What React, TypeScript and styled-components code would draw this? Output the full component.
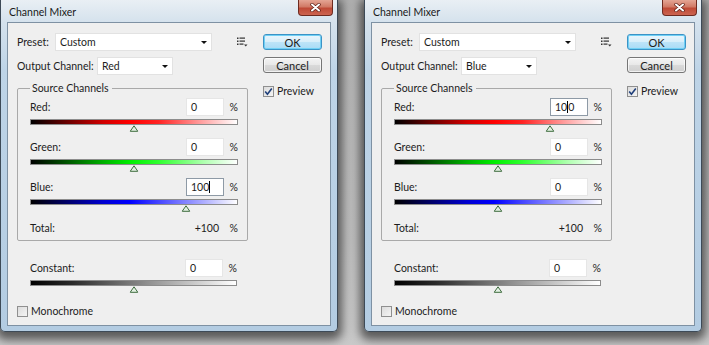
import React from 'react'
import styled, { createGlobalStyle } from 'styled-components'

const GlobalStyle = createGlobalStyle`
  html, body {
    margin: 0;
    padding: 0;
  }
  body {
    width: 709px;
    height: 345px;
    overflow: hidden;
    background: #c3c3c3;
    font-family: Lato, "Noto Sans", sans-serif;
    color: #1c1c1c;
  }
`

const RED =
  'linear-gradient(to right, #000 0%, #5a0000 15%, #d00000 35%, #ff0000 48%, #ff2424 62%, #ff9c9c 82%, #fff 100%)'
const GREEN =
  'linear-gradient(to right, #000 0%, #004800 15%, #00b000 35%, #00ee00 48%, #30ff30 62%, #b0ffb0 84%, #fff 100%)'
const BLUE =
  'linear-gradient(to right, #000 0%, #00005a 15%, #0000d0 35%, #0000ff 48%, #3c3cff 60%, #aeaeff 84%, #fff 100%)'
const GRAY = 'linear-gradient(to right, #000 0%, #2a2a2a 20%, #8a8a8a 55%, #fff 100%)'

type Channel = {
  name: string
  value: string
  caret?: number
  gradient: string
  amount: number
}

type DialogProps = {
  output: string
  channels: Channel[]
}

const MenuIcon = () => (
  <svg width="11" height="10" viewBox="0 0 11 10">
    <g fill="#333">
      <rect x="0" y="0.5" width="1.5" height="1.5" />
      <rect x="0" y="3.5" width="1.5" height="1.5" />
      <rect x="0" y="6.5" width="1.5" height="1.5" />
      <rect x="2.5" y="0.5" width="5.5" height="1.2" />
      <rect x="2.5" y="3.5" width="5.5" height="1.2" />
      <rect x="2.5" y="6.5" width="4" height="1.2" />
      <path d="M7 7.5 L10.5 7.5 L8.75 9.5 Z" />
    </g>
  </svg>
)

const CloseIcon = () => (
  <svg width="11" height="9" viewBox="0 0 11 9">
    <path d="M2 1.5 L9 7.5 M9 1.5 L2 7.5" stroke="#5c1d14" strokeWidth="3.4" strokeLinecap="round" />
    <path d="M2 1.5 L9 7.5 M9 1.5 L2 7.5" stroke="#fff" strokeWidth="2" strokeLinecap="round" />
  </svg>
)

const Thumb = () => (
  <svg width="9" height="7" viewBox="0 0 9 7">
    <path d="M4.5 0.8 L8.3 6.3 L0.7 6.3 Z" fill="#e4f1e4" stroke="#3f6d3f" strokeWidth="1" />
  </svg>
)

const Check = () => (
  <svg width="9" height="9" viewBox="0 0 9 9">
    <path d="M1.2 4.6 L3.4 7.2 L7.8 1.4" fill="none" stroke="#1f3f7a" strokeWidth="1.6" />
  </svg>
)

const Slider = ({ gradient, amount }: { gradient: string; amount: number }) => (
  <SliderTrack>
    <Bar $gradient={gradient} />
    <ThumbSpot style={{ left: `${((amount + 200) / 400) * 100}%` }}>
      <Thumb />
    </ThumbSpot>
  </SliderTrack>
)

const ValueBox = ({ value, caret }: { value: string; caret?: number }) => {
  const focused = caret !== undefined
  return (
    <Input $focused={focused}>
      {focused ? value.slice(0, caret) : value}
      {focused && <Caret />}
      {focused && value.slice(caret)}
    </Input>
  )
}

const Dialog = ({ output, channels }: DialogProps) => (
  <Window>
    <TitleBar>
      <Title>Channel Mixer</Title>
      <CloseButton>
        <CloseIcon />
      </CloseButton>
    </TitleBar>
    <Client>
      <Main>
        <FieldRow>
          <Label $width={38}>Preset:</Label>
          <Select $width={157}>
            Custom
            <Arrow />
          </Select>
          <MenuSpot>
            <MenuIcon />
          </MenuSpot>
        </FieldRow>
        <FieldRow $gap={6}>
          <Label $width={80}>Output Channel:</Label>
          <Select $width={76}>
            {output}
            <Arrow />
          </Select>
        </FieldRow>
        <Group>
          <Legend>Source Channels</Legend>
          {channels.map((c, i) => (
            <ChannelBlock key={c.name} $first={i === 0}>
              <ValueRow>
                <span>{c.name}:</span>
                <ValueBox value={c.value} caret={c.caret} />
                <Percent>%</Percent>
              </ValueRow>
              <Slider gradient={c.gradient} amount={c.amount} />
            </ChannelBlock>
          ))}
          <TotalRow>
            <span>Total:</span>
            <TotalValue>+100</TotalValue>
            <Percent>%</Percent>
          </TotalRow>
        </Group>
        <ConstantBlock>
          <ValueRow>
            <span>Constant:</span>
            <ValueBox value="0" />
            <Percent>%</Percent>
          </ValueRow>
          <Slider gradient={GRAY} amount={0} />
        </ConstantBlock>
        <CheckRow $top={12}>
          <Box />
          Monochrome
        </CheckRow>
      </Main>
      <Side>
        <Button $primary>OK</Button>
        <Button>Cancel</Button>
        <CheckRow $top={4}>
          <Box>
            <Check />
          </Box>
          Preview
        </CheckRow>
      </Side>
    </Client>
  </Window>
)

const App = () => (
  <>
    <GlobalStyle />
    <Page>
      <Dialog
        output="Red"
        channels={[
          { name: 'Red', value: '0', gradient: RED, amount: 0 },
          { name: 'Green', value: '0', gradient: GREEN, amount: 0 },
          { name: 'Blue', value: '100', caret: 3, gradient: BLUE, amount: 100 },
        ]}
      />
      <Dialog
        output="Blue"
        channels={[
          { name: 'Red', value: '100', caret: 2, gradient: RED, amount: 100 },
          { name: 'Green', value: '0', gradient: GREEN, amount: 0 },
          { name: 'Blue', value: '0', gradient: BLUE, amount: 0 },
        ]}
      />
    </Page>
  </>
)

const Page = styled.div`
  display: flex;
  align-items: flex-start;
  gap: 26px;
  width: 709px;
  height: 345px;
  overflow: hidden;
  background: linear-gradient(to bottom, #b0b0b0 0%, #bdbdbd 70%, #c9c9c9 100%);
`

const Window = styled.div`
  flex: none;
  box-sizing: border-box;
  width: 338px;
  height: 332px;
  display: flex;
  flex-direction: column;
  padding: 0 6px 5px;
  border: 1px solid #3d4a57;
  border-top: none;
  border-radius: 0 0 5px 5px;
  background: linear-gradient(to bottom, #e9eff4 0px, #d5e2ed 22px, #bed4e7 70px, #b3cce2 100%);
  box-shadow: 0 4px 10px 4px rgba(0, 0, 0, 0.55);
`

const TitleBar = styled.div`
  display: flex;
  align-items: flex-start;
  height: 22px;
`

const Title = styled.div`
  padding: 5px 0 0 2px;
  font-size: 10.5px;
  line-height: 14px;
  color: #1a1a1a;
`

const CloseButton = styled.div`
  margin-left: auto;
  margin-right: -2px;
  width: 35px;
  height: 16px;
  box-sizing: border-box;
  display: flex;
  align-items: center;
  justify-content: center;
  border: 1px solid #6e2b20;
  border-top: none;
  border-radius: 0 0 4px 4px;
  background: linear-gradient(to bottom, #e4a594 0%, #d17a66 45%, #bf4a36 55%, #cc6450 100%);
`

const Client = styled.div`
  flex: 1;
  display: grid;
  grid-template-columns: 238px 59px;
  column-gap: 8px;
  align-items: start;
  padding-left: 9px;
  background: #efefef;
  border: 1px solid #7e91a3;
  font-size: 10.5px;
  white-space: nowrap;
`

const Main = styled.div`
  display: flex;
  flex-direction: column;
  padding-top: 10px;
`

const FieldRow = styled.div<{ $gap?: number }>`
  display: flex;
  align-items: center;
  height: 18px;
  margin-top: ${({ $gap }) => $gap ?? 0}px;
`

const Label = styled.span<{ $width: number }>`
  width: ${({ $width }) => $width}px;
  flex: none;
`

const Select = styled.div<{ $width: number }>`
  box-sizing: border-box;
  width: ${({ $width }) => $width}px;
  height: 18px;
  display: flex;
  align-items: center;
  padding-left: 4px;
  background: #fff;
  border: 1px solid #e2e2e2;
`

const Arrow = styled.span`
  margin-left: auto;
  margin-right: 4px;
  width: 0;
  height: 0;
  border-left: 3px solid transparent;
  border-right: 3px solid transparent;
  border-top: 3px solid #111;
`

const MenuSpot = styled.span`
  display: flex;
  margin-left: 25px;
`

const Group = styled.fieldset`
  box-sizing: border-box;
  width: 231px;
  margin: 6px 0 0;
  padding: 3px 9px 5px 12px;
  border: 1px solid #a9a9a9;
  border-radius: 2px;
  min-inline-size: 0;
`

const Legend = styled.legend`
  padding: 0 3px 0 2px;
  font-size: 10.5px;
  line-height: 14px;
`

const ChannelBlock = styled.div<{ $first?: boolean }>`
  display: flex;
  flex-direction: column;
  margin-top: ${({ $first }) => ($first ? 0 : 7)}px;
`

const ConstantBlock = styled.div`
  display: flex;
  flex-direction: column;
  width: 207px;
  margin: 18px 0 0 13px;
`

const ValueRow = styled.div`
  display: grid;
  grid-template-columns: 1fr 38px 14px;
  align-items: center;
  height: 18px;
`

const Input = styled.div<{ $focused: boolean }>`
  box-sizing: border-box;
  height: 18px;
  display: flex;
  align-items: center;
  padding-left: 4px;
  background: #fff;
  border: 1px solid ${({ $focused }) => ($focused ? '#8e9aa6' : '#e6e6e6')};
`

const Caret = styled.span`
  display: inline-block;
  width: 1px;
  height: 12px;
  background: #000;
`

const Percent = styled.span`
  justify-self: end;
`

const SliderTrack = styled.div`
  position: relative;
  height: 12px;
  margin-top: 3px;
`

const Bar = styled.div<{ $gradient: string }>`
  box-sizing: border-box;
  height: 6px;
  border: 1px solid #8c8c8c;
  background: ${({ $gradient }) => $gradient};
`

const ThumbSpot = styled.span`
  position: absolute;
  top: 6px;
  display: flex;
  transform: translateX(-50%);
`

const TotalRow = styled(ValueRow)`
  height: 14px;
  margin-top: 10px;
`

const TotalValue = styled.span`
  justify-self: end;
  padding-right: 5px;
`

const Side = styled.div`
  display: flex;
  flex-direction: column;
  gap: 7px;
  padding-top: 11px;
`

const Button = styled.div<{ $primary?: boolean }>`
  box-sizing: border-box;
  height: 16px;
  display: flex;
  align-items: center;
  justify-content: center;
  font-size: 11px;
  border-radius: 3px;
  border: 1px solid ${({ $primary }) => ($primary ? '#3c93c6' : '#767676')};
  background: ${({ $primary }) =>
    $primary
      ? 'linear-gradient(to bottom, #eaf6fd 0%, #d7eefa 50%, #bde4f8 51%, #a9dbf6 100%)'
      : 'linear-gradient(to bottom, #f4f4f4 0%, #e8e8e8 50%, #dadada 51%, #cfcfcf 100%)'};
  box-shadow: ${({ $primary }) =>
    $primary ? 'inset 0 0 0 1px #6fd0f5' : 'inset 0 0 0 1px rgba(255, 255, 255, 0.7)'};
`

const CheckRow = styled.label<{ $top: number }>`
  display: flex;
  align-items: center;
  gap: 3px;
  height: 14px;
  margin-top: ${({ $top }) => $top}px;
`

const Box = styled.span`
  box-sizing: border-box;
  width: 11px;
  height: 11px;
  display: flex;
  align-items: center;
  justify-content: center;
  border: 1px solid #8f8f8f;
  background: linear-gradient(135deg, #dcdcdc 0%, #f4f4f4 100%);
`

export default App
